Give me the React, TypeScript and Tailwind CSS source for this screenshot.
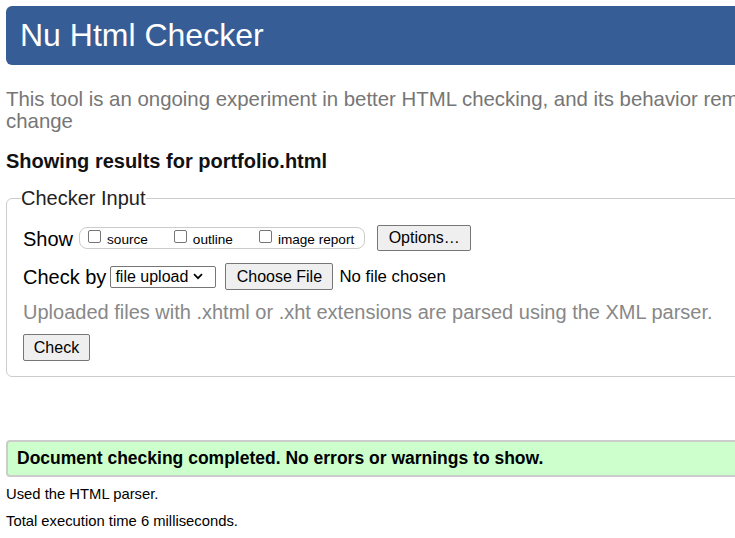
const Checkbox = ({ label }: { label: string }) => (
  <span className="flex items-start mr-[26px] last:mr-[10px]">
    <span className="mt-[2px] w-[13px] h-[13px] border border-[#767676] rounded-[2px] bg-white" />
    <span className="ml-[6px] text-[13.6px] leading-[22px] mt-[1px]">{label}</span>
  </span>
);

const Btn = ({ children, className = "" }: { children: React.ReactNode; className?: string }) => (
  <span
    className={
      "inline-flex items-center justify-center bg-[#efefef] border border-[#767676] rounded-[2px] text-[16px] text-black " +
      className
    }
  >
    {children}
  </span>
);

export default function App() {
  return (
    <div className="w-[735px] h-[538px] overflow-hidden bg-white" style={{ fontFamily: '"Liberation Sans", Arial, sans-serif' }}>
      <div className="w-[1100px] px-[6px] pt-[6px] text-[#222]">
        <header className="h-[59px] bg-[#365d95] rounded-[6px] flex items-center pl-[14px]">
          <h1 className="text-white text-[32px] leading-none mb-[1px]">Nu Html Checker</h1>
        </header>

        <p className="mt-[23px] text-[20.4px] leading-[22px] text-[#767676] whitespace-nowrap">
          This tool is an ongoing experiment in better HTML checking, and its behavior remains subject to
          <br />
          change
        </p>

        <h2 className="mt-[18px] text-[20px] font-bold text-[#111] leading-[22px]">
          Showing results for portfolio.html
        </h2>

        <fieldset className="mt-[15px] border border-[#cccccc] rounded-[6px] pl-[16px] pb-[15px] pt-[0px]">
          <legend className="text-[20px] leading-[22px] text-[#222] px-[0px] ml-[-2px]">Checker Input</legend>

          <div className="flex items-center mt-[16px] h-[26px]">
            <span className="text-[20px] text-black mr-[6px] mt-[2px]">Show</span>
            <span className="flex h-[22px] border border-[#cccccc] rounded-[8px] pl-[8px] text-black">
              <Checkbox label="source" />
              <Checkbox label="outline" />
              <Checkbox label="image report" />
            </span>
            <Btn className="ml-[12px] w-[94px] h-[26px]">Options…</Btn>
          </div>

          <div className="flex items-center mt-[12px] h-[27px] text-black">
            <span className="text-[20px] mr-[4px]">Check by</span>
            <span className="flex items-center w-[106px] h-[22px] border border-[#767676] rounded-[2px] pl-[4px] text-[16px]">
              file upload
              <svg width="10" height="7" viewBox="0 0 10 7" className="ml-[5px]">
                <path d="M1 1.2 L5 5.2 L9 1.2" fill="none" stroke="#000" strokeWidth="1.7" />
              </svg>
            </span>
            <Btn className="ml-[9px] w-[108px] h-[27px]">Choose File</Btn>
            <span className="ml-[6px] text-[16.8px]">No file chosen</span>
          </div>

          <p className="mt-[10px] text-[20px] leading-[24px] text-[#888888]">
            Uploaded files with .xhtml or .xht extensions are parsed using the XML parser.
          </p>

          <Btn className="mt-[10px] w-[67px] h-[27px]">Check</Btn>
        </fieldset>

        <div className="mt-[63px] h-[37px] bg-[#ccffcc] border-2 border-[#cccccc] rounded-[4px] flex items-center pl-[9px]">
          <span className="text-[17.5px] font-bold text-black">Document checking completed. No errors or warnings to show.</span>
        </div>

        <p className="mt-[8px] text-[14.8px] leading-[18px] text-black">Used the HTML parser.</p>
        <p className="mt-[9px] text-[14.8px] leading-[18px] text-black">Total execution time 6 milliseconds.</p>
      </div>
    </div>
  );
}
